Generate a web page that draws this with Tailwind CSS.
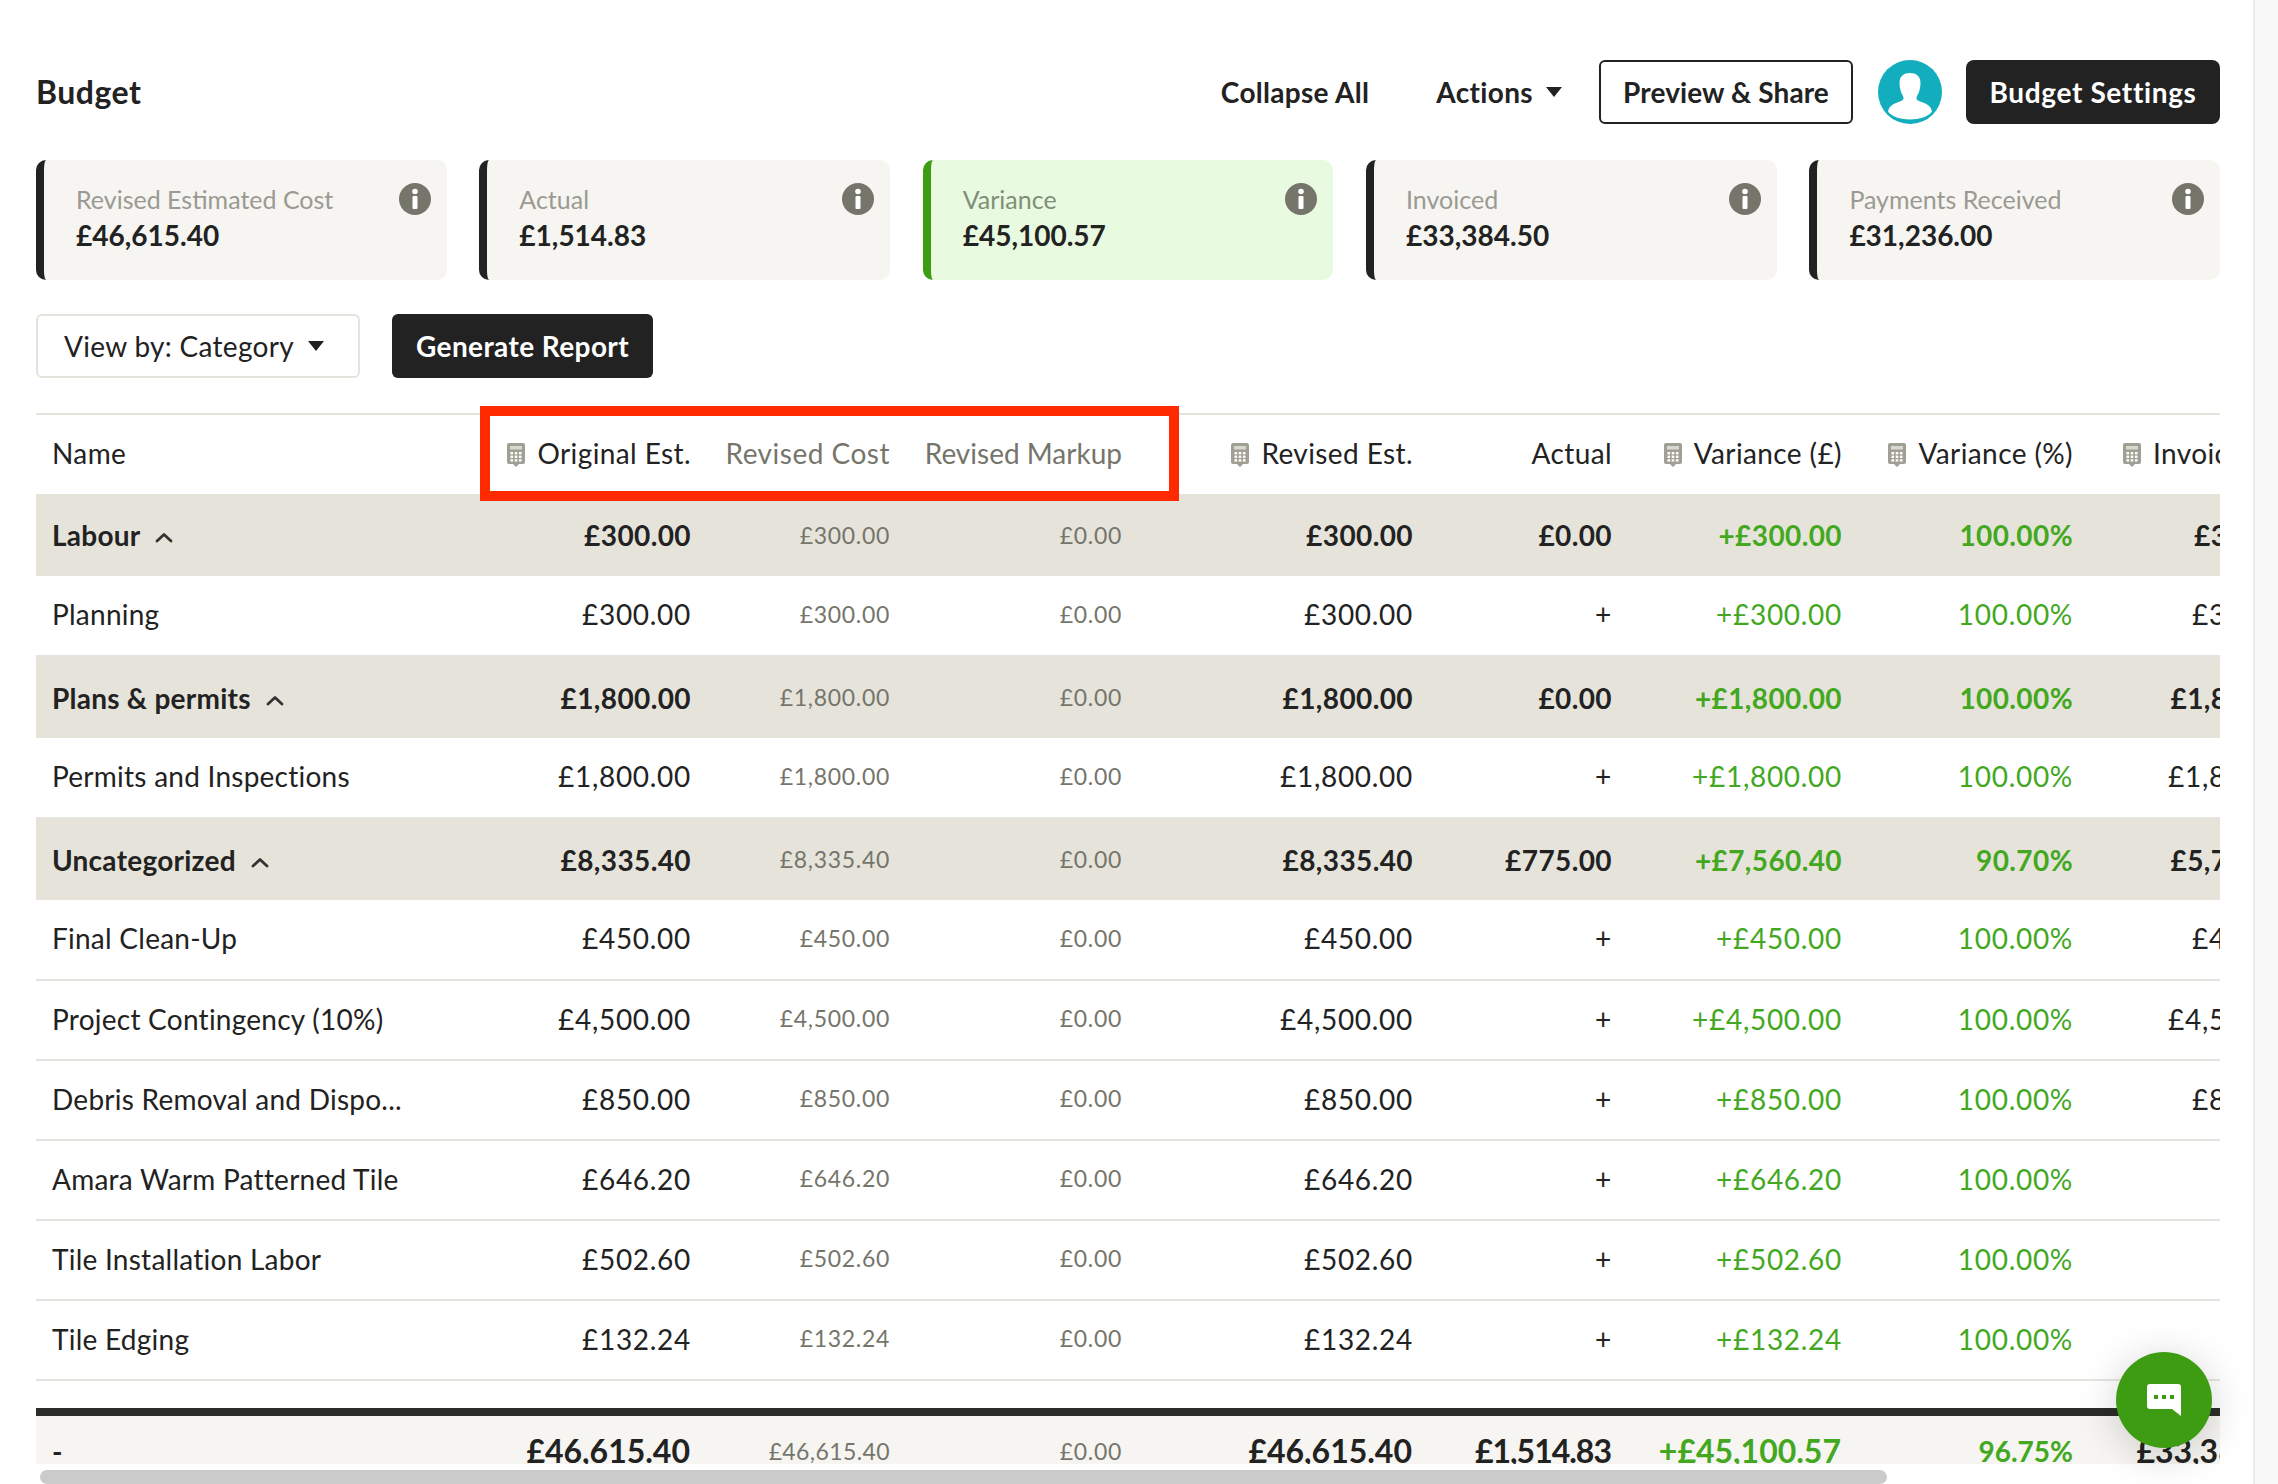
<!DOCTYPE html>
<html lang="en"><head><meta charset="utf-8"><title>Budget</title>
<script src="https://cdn.jsdelivr.net/npm/@tailwindcss/browser@4"></script>
</head>
<body class="m-0 bg-white font-[Lato,sans-serif] text-[#222] overflow-hidden">
<svg class="hidden"><defs>
<symbol id="calc" viewBox="0 0 18 24"><path d="M2 0h14a2 2 0 0 1 2 2v17a2 2 0 0 1-2 2h-4l-3 3-3-3H2a2 2 0 0 1-2-2V2a2 2 0 0 1 2-2z" fill="#a09f93"/><rect x="3" y="3" width="12" height="3.5" fill="#d9d8cf"/><g fill="#fff"><rect x="3.5" y="9" width="2.6" height="2.4"/><rect x="7.7" y="9" width="2.6" height="2.4"/><rect x="11.9" y="9" width="2.6" height="2.4"/><rect x="3.5" y="12.6" width="2.6" height="2.4"/><rect x="7.7" y="12.6" width="2.6" height="2.4"/><rect x="11.9" y="12.6" width="2.6" height="2.4"/><rect x="3.5" y="16.2" width="2.6" height="2.4"/><rect x="7.7" y="16.2" width="2.6" height="2.4"/><rect x="11.9" y="16.2" width="2.6" height="2.4"/></g></symbol>
<symbol id="info" viewBox="0 0 32 32"><circle cx="16" cy="16" r="16" fill="#75756c"/><circle cx="16" cy="8.5" r="2.8" fill="#fff"/><rect x="13.5" y="13" width="5" height="13" rx="1" fill="#fff"/></symbol>
<symbol id="chev" viewBox="0 0 18 11"><path d="M2 9l7-6.500L16 9" fill="none" stroke="#333" stroke-width="2.8" stroke-linecap="round" stroke-linejoin="round"/></symbol>
</defs></svg>
<div class="flex h-[1484px] w-[2278px] overflow-hidden">
<main class="relative w-[2253px] shrink-0 pl-[36px] pr-[33px] pt-[60px]">
  <header class="flex h-[64px] items-center justify-between">
    <h1 class="text-[32px] font-bold tracking-[0.5px]">Budget</h1>
    <div class="flex items-center">
      <span class="mr-[67px] text-[28px] font-bold tracking-[0.3px]">Collapse All</span>
      <span class="mr-[37px] flex items-center gap-[13px] text-[28px] font-bold tracking-[0.35px]">Actions <svg width="16" height="10" viewBox="0 0 16 10"><path d="M0 0h16L8 10z" fill="#222"/></svg></span>
      <button class="mr-[25px] flex h-[64px] w-[254px] items-center justify-center rounded-[6px] border-2 border-[#222] text-[28px] font-bold tracking-[0.1px]">Preview &amp; Share</button>
      <svg class="mr-[24px]" width="64" height="64" viewBox="0 0 64 64"><circle cx="32" cy="32" r="32" fill="#12aebd"/><path d="M32 13c6 0 10.500 3 10.500 10 0 5-1.500 10-3.500 13-1 2-.5 3.500 1 4.500 4 2 11 3.500 13 8l1 3c-3 5-13 8-22 8s-19-3-22-8l1-3c2-4.500 9-6 13-8 1.500-1 2-2.500 1-4.500-2-3-3.500-8-3.500-13 0-7 4.500-10 10.500-10z" fill="#fff"/></svg>
      <button class="flex h-[64px] w-[254px] items-center justify-center rounded-[8px] bg-[#222] text-[28px] font-bold tracking-[0.65px] text-white">Budget Settings</button>
    </div>
  </header>

  <section class="mt-[36px] flex gap-[32.75px]">
    <div class="relative h-[120px] w-[411px] rounded-[10px] border-l-[8px] border-[#222] bg-[#f6f5f1] pl-[32px] pt-[24px]"><p class="text-[25px] leading-[31px] text-[#9a9a92]">Revised Estimated Cost</p><p class="text-[28px] leading-[41px] font-bold">£46,615.40</p><svg class="absolute right-[16px] top-[23px] h-[32px] w-[32px]"><use href="#info"/></svg></div>
    <div class="relative h-[120px] w-[411px] rounded-[10px] border-l-[8px] border-[#222] bg-[#f6f5f1] pl-[32px] pt-[24px]"><p class="text-[25px] leading-[31px] text-[#9a9a92]">Actual</p><p class="text-[28px] leading-[41px] font-bold">£1,514.83</p><svg class="absolute right-[16px] top-[23px] h-[32px] w-[32px]"><use href="#info"/></svg></div>
    <div class="relative h-[120px] w-[411px] rounded-[10px] border-l-[8px] border-[#3d9c12] bg-[#e8fadf] pl-[32px] pt-[24px]"><p class="text-[25px] leading-[31px] text-[#7f8f78]">Variance</p><p class="text-[28px] leading-[41px] font-bold">£45,100.57</p><svg class="absolute right-[16px] top-[23px] h-[32px] w-[32px]"><use href="#info"/></svg></div>
    <div class="relative h-[120px] w-[411px] rounded-[10px] border-l-[8px] border-[#222] bg-[#f6f5f1] pl-[32px] pt-[24px]"><p class="text-[25px] leading-[31px] text-[#9a9a92]">Invoiced</p><p class="text-[28px] leading-[41px] font-bold">£33,384.50</p><svg class="absolute right-[16px] top-[23px] h-[32px] w-[32px]"><use href="#info"/></svg></div>
    <div class="relative h-[120px] w-[411px] rounded-[10px] border-l-[8px] border-[#222] bg-[#f6f5f1] pl-[32px] pt-[24px]"><p class="text-[25px] leading-[31px] text-[#9a9a92]">Payments Received</p><p class="text-[28px] leading-[41px] font-bold">£31,236.00</p><svg class="absolute right-[16px] top-[23px] h-[32px] w-[32px]"><use href="#info"/></svg></div>
  </section>

  <section class="mt-[34px] flex gap-[32px]">
    <button class="flex h-[64px] w-[324px] items-center gap-[14px] rounded-[6px] border-2 border-[#e5e4dc] pl-[26px] text-[28px] tracking-[0.3px]">View by: Category <svg width="16" height="10" viewBox="0 0 16 10"><path d="M0 0h16L8 10z" fill="#222"/></svg></button>
    <button class="flex h-[64px] w-[261px] items-center justify-center rounded-[6px] bg-[#222] text-[28px] font-bold tracking-[0.4px] text-white">Generate Report</button>
  </section>

  <div class="mt-[35px] h-[1051px] w-[2184px] overflow-hidden border-t-2 border-[#e5e4dc]">
    <table class="w-[2280px] table-fixed border-separate border-spacing-0 text-[28px] tracking-[0.7px] [&_td:first-child]:tracking-[0.25px] [&_th]:pb-[3px] [&_td.border-b-2]:pb-[3px]">
      <colgroup><col class="w-[434px]"><col class="w-[236px]"><col class="w-[199px]"><col class="w-[232px]"><col class="w-[291px]"><col class="w-[199px]"><col class="w-[230px]"><col class="w-[231px]"><col class="w-[228px]"></colgroup>
      <thead><tr class="h-[79px] font-normal tracking-[0.4px]">
        <th class="pl-[16px] text-left font-normal">Name</th>
        <th class="pr-[15px] text-right font-normal"><svg class="mr-[12px] inline-block h-[24px] w-[18px] align-[-3px]"><use href="#calc"/></svg>Original Est.</th>
        <th class="pr-[15px] text-right font-normal tracking-[0.5px] text-[#75756c]">Revised Cost</th>
        <th class="pr-[15px] text-right font-normal tracking-normal text-[#75756c]">Revised Markup</th>
        <th class="pr-[15px] text-right font-normal"><svg class="mr-[12px] inline-block h-[24px] w-[18px] align-[-3px]"><use href="#calc"/></svg>Revised Est.</th>
        <th class="pr-[15px] text-right font-normal">Actual</th>
        <th class="pr-[15px] text-right font-normal"><svg class="mr-[12px] inline-block h-[24px] w-[18px] align-[-3px]"><use href="#calc"/></svg>Variance (£)</th>
        <th class="pr-[15px] text-right font-normal"><svg class="mr-[12px] inline-block h-[24px] w-[18px] align-[-3px]"><use href="#calc"/></svg>Variance (%)</th>
        <th class="pl-[35px] text-left font-normal whitespace-nowrap"><svg class="mr-[12px] inline-block h-[24px] w-[18px] align-[-3px]"><use href="#calc"/></svg>Invoiced</th>
      </tr></thead>
      <tbody>
        <tr class="h-[82px] bg-[#e6e4da] font-bold tracking-[0.4px]"><td class="pl-[16px]">Labour <svg class="ml-[8px] inline-block h-[11px] w-[18px] align-[3px]"><use href="#chev"/></svg></td><td class="pr-[15px] text-right">£300.00</td><td class="pr-[15px] text-right text-[23px] font-normal tracking-[0.7px] text-[#75756c]">£300.00</td><td class="pr-[15px] text-right text-[23px] font-normal tracking-[0.7px] text-[#75756c]">£0.00</td><td class="pr-[15px] text-right">£300.00</td><td class="pr-[15px] text-right">£0.00</td><td class="pr-[15px] text-right text-[#43a81f]">+£300.00</td><td class="pr-[15px] text-right text-[#43a81f]">100.00%</td><td class="pr-[15px] text-right">£300.00</td></tr>
        <tr class="h-[81px]"><td class="border-b-2 border-[#e5e5e0] pl-[16px]">Planning</td><td class="border-b-2 border-[#e5e5e0] pr-[15px] text-right">£300.00</td><td class="border-b-2 border-[#e5e5e0] pr-[15px] text-right text-[23px] text-[#75756c]">£300.00</td><td class="border-b-2 border-[#e5e5e0] pr-[15px] text-right text-[23px] text-[#75756c]">£0.00</td><td class="border-b-2 border-[#e5e5e0] pr-[15px] text-right">£300.00</td><td class="border-b-2 border-[#e5e5e0] pr-[15px] text-right">+</td><td class="border-b-2 border-[#e5e5e0] pr-[15px] text-right text-[#43a81f]">+£300.00</td><td class="border-b-2 border-[#e5e5e0] pr-[15px] text-right text-[#43a81f]">100.00%</td><td class="border-b-2 border-[#e5e5e0] pr-[15px] text-right">£300.00</td></tr>
        <tr class="h-[81px] bg-[#e6e4da] font-bold tracking-[0.4px]"><td class="pl-[16px]">Plans &amp; permits <svg class="ml-[8px] inline-block h-[11px] w-[18px] align-[3px]"><use href="#chev"/></svg></td><td class="pr-[15px] text-right">£1,800.00</td><td class="pr-[15px] text-right text-[23px] font-normal tracking-[0.7px] text-[#75756c]">£1,800.00</td><td class="pr-[15px] text-right text-[23px] font-normal tracking-[0.7px] text-[#75756c]">£0.00</td><td class="pr-[15px] text-right">£1,800.00</td><td class="pr-[15px] text-right">£0.00</td><td class="pr-[15px] text-right text-[#43a81f]">+£1,800.00</td><td class="pr-[15px] text-right text-[#43a81f]">100.00%</td><td class="pr-[15px] text-right">£1,800.00</td></tr>
        <tr class="h-[81px]"><td class="border-b-2 border-[#e5e5e0] pl-[16px]">Permits and Inspections</td><td class="border-b-2 border-[#e5e5e0] pr-[15px] text-right">£1,800.00</td><td class="border-b-2 border-[#e5e5e0] pr-[15px] text-right text-[23px] text-[#75756c]">£1,800.00</td><td class="border-b-2 border-[#e5e5e0] pr-[15px] text-right text-[23px] text-[#75756c]">£0.00</td><td class="border-b-2 border-[#e5e5e0] pr-[15px] text-right">£1,800.00</td><td class="border-b-2 border-[#e5e5e0] pr-[15px] text-right">+</td><td class="border-b-2 border-[#e5e5e0] pr-[15px] text-right text-[#43a81f]">+£1,800.00</td><td class="border-b-2 border-[#e5e5e0] pr-[15px] text-right text-[#43a81f]">100.00%</td><td class="border-b-2 border-[#e5e5e0] pr-[15px] text-right">£1,800.00</td></tr>
        <tr class="h-[81px] bg-[#e6e4da] font-bold tracking-[0.4px]"><td class="pl-[16px]">Uncategorized <svg class="ml-[8px] inline-block h-[11px] w-[18px] align-[3px]"><use href="#chev"/></svg></td><td class="pr-[15px] text-right">£8,335.40</td><td class="pr-[15px] text-right text-[23px] font-normal tracking-[0.7px] text-[#75756c]">£8,335.40</td><td class="pr-[15px] text-right text-[23px] font-normal tracking-[0.7px] text-[#75756c]">£0.00</td><td class="pr-[15px] text-right">£8,335.40</td><td class="pr-[15px] text-right">£775.00</td><td class="pr-[15px] text-right text-[#43a81f]">+£7,560.40</td><td class="pr-[15px] text-right text-[#43a81f]">90.70%</td><td class="pr-[15px] text-right">£5,748.50</td></tr>
        <tr class="h-[81px]"><td class="border-b-2 border-[#e5e5e0] pl-[16px]">Final Clean-Up</td><td class="border-b-2 border-[#e5e5e0] pr-[15px] text-right">£450.00</td><td class="border-b-2 border-[#e5e5e0] pr-[15px] text-right text-[23px] text-[#75756c]">£450.00</td><td class="border-b-2 border-[#e5e5e0] pr-[15px] text-right text-[23px] text-[#75756c]">£0.00</td><td class="border-b-2 border-[#e5e5e0] pr-[15px] text-right">£450.00</td><td class="border-b-2 border-[#e5e5e0] pr-[15px] text-right">+</td><td class="border-b-2 border-[#e5e5e0] pr-[15px] text-right text-[#43a81f]">+£450.00</td><td class="border-b-2 border-[#e5e5e0] pr-[15px] text-right text-[#43a81f]">100.00%</td><td class="border-b-2 border-[#e5e5e0] pr-[15px] text-right">£450.00</td></tr>
        <tr class="h-[80px]"><td class="border-b-2 border-[#e5e5e0] pl-[16px]">Project Contingency (10%)</td><td class="border-b-2 border-[#e5e5e0] pr-[15px] text-right">£4,500.00</td><td class="border-b-2 border-[#e5e5e0] pr-[15px] text-right text-[23px] text-[#75756c]">£4,500.00</td><td class="border-b-2 border-[#e5e5e0] pr-[15px] text-right text-[23px] text-[#75756c]">£0.00</td><td class="border-b-2 border-[#e5e5e0] pr-[15px] text-right">£4,500.00</td><td class="border-b-2 border-[#e5e5e0] pr-[15px] text-right">+</td><td class="border-b-2 border-[#e5e5e0] pr-[15px] text-right text-[#43a81f]">+£4,500.00</td><td class="border-b-2 border-[#e5e5e0] pr-[15px] text-right text-[#43a81f]">100.00%</td><td class="border-b-2 border-[#e5e5e0] pr-[15px] text-right">£4,500.00</td></tr>
        <tr class="h-[80px]"><td class="border-b-2 border-[#e5e5e0] pl-[16px]">Debris Removal and Dispo...</td><td class="border-b-2 border-[#e5e5e0] pr-[15px] text-right">£850.00</td><td class="border-b-2 border-[#e5e5e0] pr-[15px] text-right text-[23px] text-[#75756c]">£850.00</td><td class="border-b-2 border-[#e5e5e0] pr-[15px] text-right text-[23px] text-[#75756c]">£0.00</td><td class="border-b-2 border-[#e5e5e0] pr-[15px] text-right">£850.00</td><td class="border-b-2 border-[#e5e5e0] pr-[15px] text-right">+</td><td class="border-b-2 border-[#e5e5e0] pr-[15px] text-right text-[#43a81f]">+£850.00</td><td class="border-b-2 border-[#e5e5e0] pr-[15px] text-right text-[#43a81f]">100.00%</td><td class="border-b-2 border-[#e5e5e0] pr-[15px] text-right">£850.00</td></tr>
        <tr class="h-[80px]"><td class="border-b-2 border-[#e5e5e0] pl-[16px]">Amara Warm Patterned Tile</td><td class="border-b-2 border-[#e5e5e0] pr-[15px] text-right">£646.20</td><td class="border-b-2 border-[#e5e5e0] pr-[15px] text-right text-[23px] text-[#75756c]">£646.20</td><td class="border-b-2 border-[#e5e5e0] pr-[15px] text-right text-[23px] text-[#75756c]">£0.00</td><td class="border-b-2 border-[#e5e5e0] pr-[15px] text-right">£646.20</td><td class="border-b-2 border-[#e5e5e0] pr-[15px] text-right">+</td><td class="border-b-2 border-[#e5e5e0] pr-[15px] text-right text-[#43a81f]">+£646.20</td><td class="border-b-2 border-[#e5e5e0] pr-[15px] text-right text-[#43a81f]">100.00%</td><td class="border-b-2 border-[#e5e5e0]"></td></tr>
        <tr class="h-[80px]"><td class="border-b-2 border-[#e5e5e0] pl-[16px]">Tile Installation Labor</td><td class="border-b-2 border-[#e5e5e0] pr-[15px] text-right">£502.60</td><td class="border-b-2 border-[#e5e5e0] pr-[15px] text-right text-[23px] text-[#75756c]">£502.60</td><td class="border-b-2 border-[#e5e5e0] pr-[15px] text-right text-[23px] text-[#75756c]">£0.00</td><td class="border-b-2 border-[#e5e5e0] pr-[15px] text-right">£502.60</td><td class="border-b-2 border-[#e5e5e0] pr-[15px] text-right">+</td><td class="border-b-2 border-[#e5e5e0] pr-[15px] text-right text-[#43a81f]">+£502.60</td><td class="border-b-2 border-[#e5e5e0] pr-[15px] text-right text-[#43a81f]">100.00%</td><td class="border-b-2 border-[#e5e5e0]"></td></tr>
        <tr class="h-[80px]"><td class="border-b-2 border-[#e5e5e0] pl-[16px]">Tile Edging</td><td class="border-b-2 border-[#e5e5e0] pr-[15px] text-right">£132.24</td><td class="border-b-2 border-[#e5e5e0] pr-[15px] text-right text-[23px] text-[#75756c]">£132.24</td><td class="border-b-2 border-[#e5e5e0] pr-[15px] text-right text-[23px] text-[#75756c]">£0.00</td><td class="border-b-2 border-[#e5e5e0] pr-[15px] text-right">£132.24</td><td class="border-b-2 border-[#e5e5e0] pr-[15px] text-right">+</td><td class="border-b-2 border-[#e5e5e0] pr-[15px] text-right text-[#43a81f]">+£132.24</td><td class="border-b-2 border-[#e5e5e0] pr-[15px] text-right text-[#43a81f]">100.00%</td><td class="border-b-2 border-[#e5e5e0]"></td></tr>
        <tr class="h-[27px]"><td colspan="9"></td></tr>
      </tbody>
      <tfoot><tr class="h-[78px] bg-[#f6f5f1] font-bold tracking-normal">
        <td class="border-t-[8px] border-[#2c2c28] pl-[16px]">-</td><td class="border-t-[8px] border-[#2c2c28] pr-[16px] text-right text-[32px]">£46,615.40</td><td class="border-t-[8px] border-[#2c2c28] pr-[15px] text-right text-[23px] font-normal tracking-[0.4px] text-[#75756c]">£46,615.40</td><td class="border-t-[8px] border-[#2c2c28] pr-[15px] text-right text-[23px] font-normal tracking-[0.7px] text-[#75756c]">£0.00</td><td class="border-t-[8px] border-[#2c2c28] pr-[16px] text-right text-[32px]">£46,615.40</td><td class="border-t-[8px] border-[#2c2c28] pr-[16px] text-right text-[32px] tracking-[-1px]">£1,514.83</td><td class="border-t-[8px] border-[#2c2c28] pr-[16px] text-right text-[32px] text-[#43a81f]">+£45,100.57</td><td class="border-t-[8px] border-[#2c2c28] pr-[15px] text-right text-[#43a81f]">96.75%</td><td class="border-t-[8px] border-[#2c2c28] pr-[16px] text-right text-[32px]">£33,384.50</td>
      </tr></tfoot>
    </table>
  </div>
  <div class="mt-[6px] ml-[4px] h-[14px] w-[1847px] rounded-full bg-[#cbcbcb]"></div>

  <div class="absolute left-[480px] top-[406px] h-[95px] w-[699px] border-[10px] border-[#ff2a00]"></div>
  <button class="absolute left-[2116px] top-[1352px] flex h-[96px] w-[96px] items-center justify-center rounded-full bg-[#3d9c12] shadow-[0_6px_40px_rgba(0,0,0,0.18)]"><svg width="34" height="32" viewBox="0 0 34 32"><path d="M3 0h28a3 3 0 0 1 3 3v29l-9-7H3a3 3 0 0 1-3-3V3a3 3 0 0 1 3-3z" fill="#fff"/><g fill="#3d9c12"><rect x="7" y="11" width="4" height="4"/><rect x="15" y="11" width="4" height="4"/><rect x="23" y="11" width="4" height="4"/></g></svg></button>
</main>
<aside class="grow border-l-2 border-[#ececec] bg-[#f8f8f8]"></aside>
</div>
</body></html>
